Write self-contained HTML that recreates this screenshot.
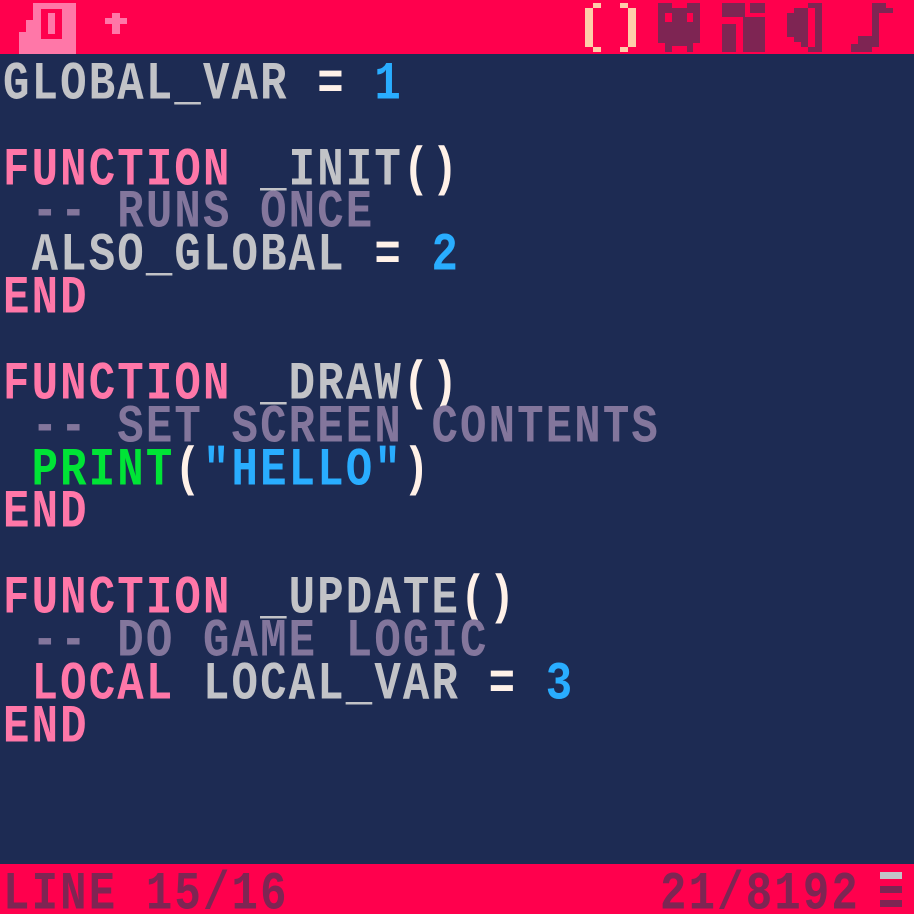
<!DOCTYPE html>
<html><head><meta charset="utf-8"><style>
html,body{margin:0;padding:0;}
body{width:914px;height:914px;background:#1d2b53;position:relative;overflow:hidden;}
.l{position:absolute;left:3px;white-space:pre;font-family:"Liberation Mono",monospace;font-weight:bold;font-size:44px;line-height:44px;letter-spacing:2.16px;transform:scaleY(1.23);transform-origin:0 0;color:#c2c3c7;}
.k{color:#ff77a8}.c{color:#83769c}.n{color:#29adff}.w{color:#fff1e8}.g{color:#00e436}.d{color:#7e2553}
</style></head><body>
<svg width="914" height="56" style="position:absolute;left:0;top:0">
<rect x="0" y="0" width="914" height="54" fill="#ff004d"/>
<path fill="#ff77a8" d="M33 3H76V54H19V32H26V20H33Z"/>
<rect x="41" y="9" width="21" height="30" fill="#ff004d"/>
<rect x="48" y="13" width="7" height="21" fill="#ff77a8"/>
<path fill="#ff77a8" d="M112 13h8v5h7v6h-7v10h-8V24h-7v-6h7z"/>
<g fill="#ffccaa"><rect x="593" y="3" width="8" height="5"/><rect x="585" y="8" width="8" height="39"/><rect x="593" y="47" width="8" height="5"/>
<rect x="620" y="3" width="8" height="5"/><rect x="628" y="8" width="8" height="39"/><rect x="620" y="47" width="8" height="5"/></g>
<g fill="#7e2553">
<path d="M658 3h14v5h15V3h13v40h-7v9h-6v-6h-15v6h-7v-9h-7Z M665 13v9h7v-9Z M687 13v9h6v-9Z" fill-rule="evenodd"/>
<rect x="722" y="3" width="23" height="14"/><rect x="750" y="3" width="15" height="10"/><rect x="722" y="24" width="14" height="28"/><rect x="743" y="17" width="22" height="35"/>
<path d="M808 3h14v49h-14v-5h-7v-5h-7v-5h-7V13h7V8h7V8h7Z M808 8v39h7V8Z" fill-rule="evenodd"/>
<path d="M872 3h14v5h7v5h-14v34h-7v5h-21v-8h7v-8h14Z"/>
</g>
</svg>
<div class="l" style="top:58px">GLOBAL_VAR <span class="w">=</span> <span class="n">1</span></div>
<div class="l" style="top:144px"><span class="k">FUNCTION</span> _INIT<span class="w">()</span></div>
<div class="l c" style="top:186px"> -- RUNS ONCE</div>
<div class="l" style="top:229px"> ALSO_GLOBAL <span class="w">=</span> <span class="n">2</span></div>
<div class="l k" style="top:272px">END</div>
<div class="l" style="top:358px"><span class="k">FUNCTION</span> _DRAW<span class="w">()</span></div>
<div class="l c" style="top:401px"> -- SET SCREEN CONTENTS</div>
<div class="l" style="top:444px"> <span class="g">PRINT</span><span class="w">(</span><span class="n">"HELLO"</span><span class="w">)</span></div>
<div class="l k" style="top:486px">END</div>
<div class="l" style="top:572px"><span class="k">FUNCTION</span> _UPDATE<span class="w">()</span></div>
<div class="l c" style="top:615px"> -- DO GAME LOGIC</div>
<div class="l" style="top:658px"> <span class="k">LOCAL</span> LOCAL_VAR <span class="w">=</span> <span class="n">3</span></div>
<div class="l k" style="top:701px">END</div>
<div style="position:absolute;left:0;top:864px;width:914px;height:50px;background:#ff004d;overflow:hidden">
<div class="l d" style="top:4px">LINE 15/16</div>
<div class="l d" style="top:4px;left:660px">21/8192</div>
<div style="position:absolute;left:880px;top:8px;width:22px;height:7px;background:#c2c3c7"></div>
<div style="position:absolute;left:880px;top:22px;width:22px;height:7px;background:#7e2553"></div>
<div style="position:absolute;left:880px;top:36px;width:22px;height:7px;background:#7e2553"></div>
</div>
</body></html>
